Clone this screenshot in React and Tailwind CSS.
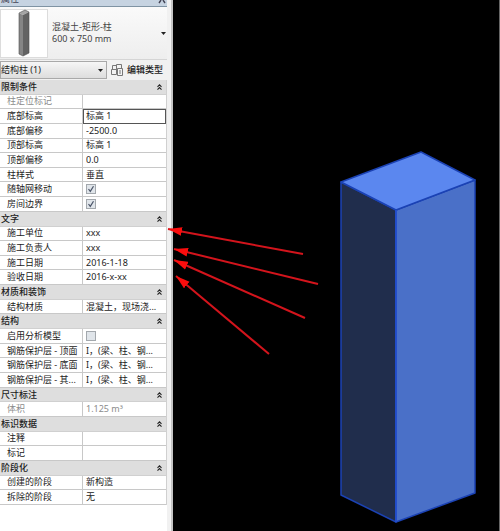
import React, { useState } from 'react';

const SECTIONS = [
  {
    title: '限制条件',
    rows: [
      { id: 'mark-loc', label: '柱定位标记', value: '', disabled: true },
      { id: 'base-level', label: '底部标高', value: '标高 1', active: true },
      { id: 'base-offset', label: '底部偏移', value: '-2500.0' },
      { id: 'top-level', label: '顶部标高', value: '标高 1' },
      { id: 'top-offset', label: '顶部偏移', value: '0.0' },
      { id: 'style', label: '柱样式', value: '垂直' },
      { id: 'move-grid', label: '随轴网移动', checked: true },
      { id: 'room-bound', label: '房间边界', checked: true },
    ],
  },
  {
    title: '文字',
    rows: [
      { id: 'unit', label: '施工单位', value: 'xxx' },
      { id: 'owner', label: '施工负责人', value: 'xxx' },
      { id: 'build-date', label: '施工日期', value: '2016-1-18' },
      { id: 'check-date', label: '验收日期', value: '2016-x-xx' },
    ],
  },
  {
    title: '材质和装饰',
    rows: [{ id: 'material', label: '结构材质', value: '混凝土，现场浇...' }],
  },
  {
    title: '结构',
    rows: [
      { id: 'analysis', label: '启用分析模型', checked: false },
      { id: 'cover-top', label: '钢筋保护层 - 顶面', value: 'I，(梁、柱、钢...' },
      { id: 'cover-bottom', label: '钢筋保护层 - 底面', value: 'I，(梁、柱、钢...' },
      { id: 'cover-other', label: '钢筋保护层 - 其...', value: 'I，(梁、柱、钢...' },
    ],
  },
  {
    title: '尺寸标注',
    rows: [{ id: 'volume', label: '体积', value: '1.125 m³', disabled: true }],
  },
  {
    title: '标识数据',
    rows: [
      { id: 'comment', label: '注释', value: '' },
      { id: 'mark', label: '标记', value: '' },
    ],
  },
  {
    title: '阶段化',
    rows: [
      { id: 'phase-new', label: '创建的阶段', value: '新构造' },
      { id: 'phase-demo', label: '拆除的阶段', value: '无' },
    ],
  },
];

const ARROWS = [
  { from: [130, 254], to: [-5, 229] },
  { from: [145, 284], to: [1, 249] },
  { from: [132, 318], to: [1, 260] },
  { from: [96, 354], to: [3, 276] },
];

const DoubleChevron = () => (
  <svg viewBox="0 0 5 6" className="h-[6px] w-[5px]" fill="none" stroke="#222" strokeWidth="1.1">
    <path d="M0.5 2.8 2.5 0.8 4.5 2.8M0.5 5.6 2.5 3.6 4.5 5.6" />
  </svg>
);

const Triangle = ({ className }) => (
  <svg viewBox="0 0 5 3" className={className} fill="#222">
    <path d="M0 0h5L2.5 3z" />
  </svg>
);

const PropertyRow = ({ row }) => {
  const isCheck = row.checked !== undefined;
  return (
    <tr>
      <th
        scope="row"
        className={`border-r border-b border-[#c8c8c8] p-0 pl-[7px] text-left font-normal whitespace-nowrap ${row.disabled ? 'text-[#8c8c8c]' : ''}`}
      >
        <label htmlFor={row.id} className="block leading-3">{row.label}</label>
      </th>
      <td
        className={`border-b border-[#c8c8c8] p-0 pl-[3px] ${row.active ? 'outline outline-1 -outline-offset-1 outline-[#555]' : ''}`}
      >
        {isCheck ? (
          <span className="relative block h-[10px] w-[10px]">
            <input
              id={row.id}
              type="checkbox"
              defaultChecked={row.checked}
              className="peer block h-[10px] w-[10px] appearance-none border border-[#a3a8ad] bg-[#e0e5ea]"
            />
            <svg
              viewBox="0 0 10 10"
              className="pointer-events-none absolute inset-0 hidden peer-checked:block"
              fill="none"
              stroke="#4a5468"
              strokeWidth="1.2"
            >
              <path d="M2.5 5 4.3 7.4 7.5 2.2" />
            </svg>
          </span>
        ) : (
          <input
            id={row.id}
            type="text"
            defaultValue={row.value}
            disabled={row.disabled}
            className="block h-3 w-full bg-transparent p-0 leading-3 outline-none disabled:text-[#8c8c8c]"
          />
        )}
      </td>
    </tr>
  );
};

const Section = ({ section }) => {
  const [open, setOpen] = useState(true);
  return (
    <tbody>
      <tr>
        <th colSpan={2} className="border-b border-[#d0d0d0] bg-[#dedede] p-0 font-medium">
          <button
            type="button"
            aria-expanded={open}
            onClick={() => setOpen(!open)}
            className="flex w-full items-center justify-between pr-1 pl-px text-left leading-3"
          >
            {section.title}
            <DoubleChevron />
          </button>
        </th>
      </tr>
      {open && section.rows.map((row) => <PropertyRow key={row.id} row={row} />)}
    </tbody>
  );
};

const PropertiesPanel = () => (
  <aside className="flex w-[173px] shrink-0 flex-col border-r-2 border-[#c4c4c4] bg-[#f1f1f1] pr-1">
    {/* title bar, scrolled mostly out of view */}
    <div className="flex h-[7px] items-end justify-between overflow-hidden border-b border-[#7f93a3] bg-[#c6d3e1] px-px pb-[2px] leading-[10px] text-[#445]">
      <span>属性</span>
      <svg viewBox="0 0 8 4" className="h-1 w-2" fill="none" stroke="#445" strokeWidth="1.4">
        <path d="M3 0 1 3M5 0 7 3" />
      </svg>
    </div>

    <button
      type="button"
      className="flex h-[53px] items-center border-b border-[#d5d5d5] bg-linear-to-b from-[#fafafa] to-[#eeeeee] pr-px text-left"
    >
      <span className="flex h-[49px] w-12 items-center justify-center border border-[#dcdcdc] bg-white">
        <svg viewBox="0 0 12 48" className="h-12 w-3">
          <path d="M1 4 7 1 11 3 5 6z" fill="#a5a5a5" />
          <path d="M1 4 5 6V47L1 45z" fill="#858585" />
          <path d="M5 6 11 3V44L5 47z" fill="#636363" />
          <path d="M1 4 7 1 11 3V44L5 47 1 45z" fill="none" stroke="#4d4d4d" strokeWidth="0.6" />
        </svg>
      </span>
      <span className="flex-1 pl-1 leading-3 text-[#444]">
        <span className="block">混凝土-矩形-柱</span>
        <span className="block">600 x 750 mm</span>
      </span>
      <Triangle className="h-[3px] w-[5px]" />
    </button>

    <div className="flex h-5 items-center gap-1">
      <div className="relative w-[107px]">
        <select
          aria-label="结构柱"
          className="block h-[18px] w-full appearance-none border border-[#a9a9a9] bg-linear-to-b from-[#f6f6f6] to-[#dddddd] p-0"
        >
          <option>结构柱 (1)</option>
        </select>
        <Triangle className="pointer-events-none absolute top-2 right-1 h-[3px] w-[5px]" />
      </div>
      <button type="button" className="flex items-center gap-1 font-medium whitespace-nowrap">
        <svg viewBox="0 0 12 12" className="h-3 w-3" fill="none" stroke="#777" strokeWidth="1">
          <path d="M1.5 1.5h4v4h-4zM0.500 5.500h5v5h-5zM5.500 0.500h5v5h-5z" />
          <path d="M6.500 4.500h5v7h-5z" fill="#f4f4f4" />
          <path d="M8 7h2M8 9h2" />
        </svg>
        编辑类型
      </button>
    </div>

    {/* rows share the height that is left */}
    <div className="flex-1 bg-white pb-[26px]">
      <table className="h-full w-full table-fixed border-separate border-spacing-0 border-r border-[#d0d0d0]">
        <colgroup>
          <col />
          <col />
        </colgroup>
        {SECTIONS.map((section) => (
          <Section key={section.title} section={section} />
        ))}
      </table>
    </div>
  </aside>
);

const Viewport = () => (
  <main className="min-w-0 flex-1 border-r border-[#666] bg-black">
    <svg viewBox="0 0 326 531" preserveAspectRatio="xMinYMin meet" className="block w-full overflow-visible">
      <defs>
        <marker id="head" viewBox="0 0 13 8" refX="13" refY="4" markerWidth="14" markerHeight="9" markerUnits="userSpaceOnUse" orient="auto">
          <path d="M0 0 13 4 0 8z" fill="#fb0d0d" />
        </marker>
      </defs>

      {/* structural column */}
      <g stroke="#1b42b4" strokeWidth="1.5" strokeLinejoin="round">
        <path d="M168 182 223 210V522L168 495z" fill="#202d4c" />
        <path d="M223 210 302 180V493L223 522z" fill="#4a70c8" />
        <path d="M168 182 248 152 302 180 223 210z" fill="#5b87ef" />
      </g>
      <path d="M223 210V522" stroke="#2450d2" strokeWidth="1.5" />

      {ARROWS.map(({ from, to }) => (
        <line
          key={from.join()}
          x1={from[0]}
          y1={from[1]}
          x2={to[0]}
          y2={to[1]}
          stroke="#d3141c"
          strokeWidth="2"
          markerEnd="url(#head)"
        />
      ))}
    </svg>
  </main>
);

export default function App() {
  return (
    <div className="flex h-screen overflow-hidden bg-black font-['Noto_Sans','Noto_Sans_CJK_SC',sans-serif] text-[9px] text-[#222]">
      <PropertiesPanel />
      <Viewport />
    </div>
  );
}
